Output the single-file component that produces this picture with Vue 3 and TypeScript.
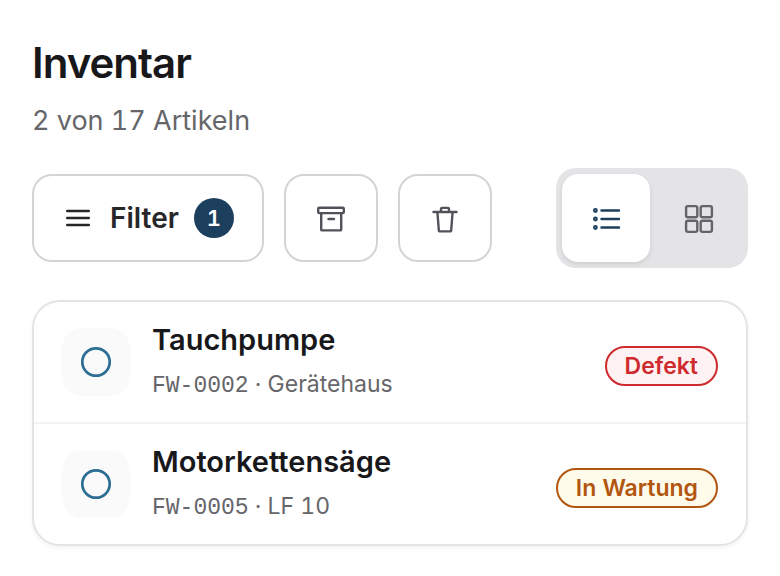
<script setup lang="ts">
import { ref } from 'vue'

interface Item {
  id: string
  name: string
  place: string
  status: string
  tone: 'danger' | 'warning'
}

const items: Item[] = [
  { id: 'FW-0002', name: 'Tauchpumpe', place: 'Gerätehaus', status: 'Defekt', tone: 'danger' },
  { id: 'FW-0005', name: 'Motorkettensäge', place: 'LF 10', status: 'In Wartung', tone: 'warning' },
]
const view = ref<'list' | 'grid'>('list')
</script>

<template>
  <main class="page">
    <header class="head">
      <h1>Inventar</h1>
      <p>2 von 17 Artikeln</p>
    </header>
    <div class="toolbar">
      <button type="button" class="btn filter">
        <svg class="icon" viewBox="0 0 32 32"><path d="M4.2 9h21.600M4.200 16h21.600M4.200 23h21.600" /></svg>
        <span>Filter</span>
        <span class="count">1</span>
      </button>
      <button type="button" class="btn square" aria-label="Archiv">
        <svg class="icon" viewBox="0 0 32 32"><rect x="3.200" y="5.700" width="25.600" height="5.400" rx="1" /><path d="M6.200 11.200v16.200a1 1 0 0 0 1 1h18a1 1 0 0 0 1-1V11.200M13.500 17h5.500" /></svg>
      </button>
      <button type="button" class="btn square" aria-label="Papierkorb">
        <svg class="icon" viewBox="0 0 32 32"><path d="M4.500 10h23M8.400 10l1.400 18a1.400 1.400 0 0 0 1.400 1.400h9.600a1.400 1.400 0 0 0 1.400-1.400L23.600 10M12 10V7a1.100 1.100 0 0 1 1.100-1.100h5.800A1.100 1.100 0 0 1 20 7v3" /></svg>
      </button>
      <div class="switch" role="group" aria-label="Ansicht">
        <button type="button" :class="{ active: view === 'list' }" :aria-pressed="view === 'list'" aria-label="Liste" @click="view = 'list'">
          <svg class="icon" viewBox="0 0 32 32"><path d="M11.500 8.500h17.500M11.500 17h17.500M11.500 25.500h17.500" /><g class="dots"><circle cx="5.400" cy="8.500" r="1.400" /><circle cx="5.400" cy="17" r="1.400" /><circle cx="5.400" cy="25.500" r="1.400" /></g></svg>
        </button>
        <button type="button" :class="{ active: view === 'grid' }" :aria-pressed="view === 'grid'" aria-label="Kacheln" @click="view = 'grid'">
          <svg class="icon tiles" viewBox="0 0 32 32"><rect x="4.100" y="4.100" width="11.200" height="11.200" rx="1.800" /><rect x="18.700" y="4.100" width="11.200" height="11.200" rx="1.800" /><rect x="4.100" y="18.700" width="11.200" height="11.200" rx="1.800" /><rect x="18.700" y="18.700" width="11.200" height="11.200" rx="1.800" /></svg>
        </button>
      </div>
    </div>
    <ul class="list">
      <li v-for="item in items" :key="item.id">
        <span class="thumb"><svg class="ring" viewBox="0 0 32 32"><circle cx="16" cy="16" r="13.700" /></svg></span>
        <div class="info">
          <h2>{{ item.name }}</h2>
          <p><span class="code">{{ item.id }}</span> · {{ item.place }}</p>
        </div>
        <span class="badge" :class="item.tone">{{ item.status }}</span>
      </li>
    </ul>
  </main>
</template>

<style>
body {
  margin: 0;
  background: #fff;
}
</style>

<style scoped>
.page {
  padding: 40px 32px 30px;
  font-family: Inter, 'Liberation Sans', sans-serif;
  font-variant-numeric: tabular-nums;
  color: #18181b;
}
h1, h2, p { margin: 0; }
h1 {
  font-size: 42px;
  line-height: 46px;
  font-weight: 600;
  letter-spacing: -1px;
}
.head p {
  margin-top: 14px;
  font-size: 27px;
  line-height: 42px;
  color: #66666a;
}
.toolbar {
  display: flex;
  align-items: center;
  gap: 20px;
  margin-top: 26px;
}
button {
  font: inherit;
  font-variant-numeric: inherit;
  color: #52525b;
  cursor: pointer;
}
.btn {
  display: flex;
  align-items: center;
  justify-content: center;
  box-sizing: border-box;
  height: 88px;
  border: 2px solid #d4d4d8;
  border-radius: 20px;
  background: #fff;
}
.filter {
  gap: 15px;
  padding: 0 28px 0 29px;
  color: #27272a;
  font-size: 28px;
  font-weight: 600;
}
.square { width: 94px; padding: 0; }
.count {
  width: 40px;
  border-radius: 50%;
  background: #1d3f5e;
  color: #fff;
  font-size: 22px;
  line-height: 40px;
  text-align: center;
}
.icon {
  width: 32px;
  height: 32px;
  fill: none;
  stroke: currentColor;
  stroke-width: 2.4;
  stroke-linecap: round;
  stroke-linejoin: round;
}
.dots { stroke-width: 2; }
.tiles { color: #636369; }
.switch {
  display: flex;
  gap: 4px;
  margin-left: auto;
  padding: 6px;
  border-radius: 20px;
  background: #e4e4e7;
}
.switch button {
  display: flex;
  align-items: center;
  justify-content: center;
  width: 88px;
  height: 88px;
  border: 0;
  padding: 0;
  border-radius: 16px;
  background: transparent;
}
.switch .active {
  color: #1d3f5e;
  background: #fff;
  box-shadow: 0 2px 4px rgb(0 0 0 / 10%);
}
.list {
  margin: 32px 0 0;
  padding: 0;
  list-style: none;
  border: 2px solid #e4e4e7;
  border-radius: 28px;
  box-shadow: 0 2px 4px rgb(0 0 0 / 5%);
}
li {
  display: flex;
  align-items: center;
  gap: 22px;
  height: 120px;
  padding: 0 28px;
}
li + li { border-top: 2px solid #f4f4f5; }
.thumb {
  display: grid;
  place-items: center;
  width: 68px;
  height: 68px;
  border-radius: 20px;
  background: #fafafa;
}
.ring {
  width: 32px;
  height: 32px;
  fill: none;
  stroke: #2c6e93;
  stroke-width: 2.7;
}
.info {
  flex: 1;
  padding-bottom: 2px;
}
h2 {
  font-size: 29px;
  line-height: 40px;
  font-weight: 600;
}
.info p {
  margin-top: 8px;
  font-size: 23px;
  line-height: 32px;
  color: #66666a;
}
.code { font-family: 'Liberation Mono', monospace; }
.badge {
  margin-top: 8px;
  padding: 0 18px;
  border: 2px solid;
  border-radius: 20px;
  font-size: 23px;
  line-height: 36px;
  font-weight: 600;
}
.danger { color: #cf2a2e; background: #fef2f2; }
.warning { color: #b2560f; background: #fffbeb; }
</style>
